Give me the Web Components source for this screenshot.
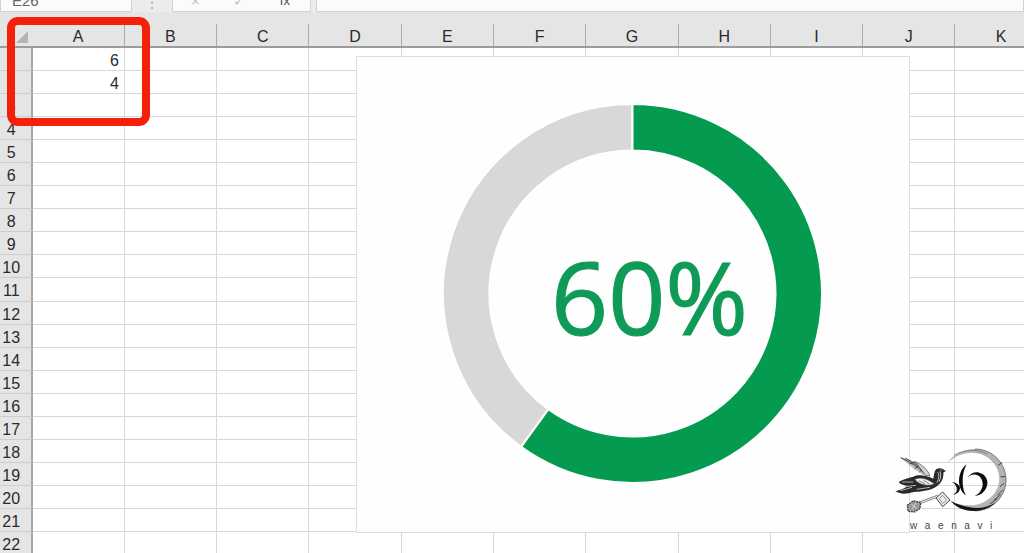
<!DOCTYPE html>
<html>
<head>
<meta charset="utf-8">
<title>Excel donut</title>
<style>
  html, body { margin: 0; height: 100%; overflow: hidden; background: #fff; }
  body { font-family: "Liberation Sans", Arial, sans-serif; }
</style>
</head>
<body>
<xl-app>
  <xl-formula-bar slot="top" name="E26"></xl-formula-bar>
  <xl-sheet></xl-sheet>
  <xl-callout></xl-callout>
  <xl-donut value="60"></xl-donut>
  <xl-logo></xl-logo>
</xl-app>
<script>
class XlApp extends HTMLElement {
    constructor() {
        super()
        this.attachShadow({ mode: 'open' }).innerHTML = `<style>
            :host { display: flex; flex-direction: column; position: relative; width: 1024px; height: 553px; overflow: hidden; }
        </style><slot name="top"></slot><slot></slot>`
    }
}

class XlFormulaBar extends HTMLElement {
    constructor() {
        super()
        this.attachShadow({ mode: 'open' })
    }
    connectedCallback() {
        const name = this.getAttribute('name') || ''
        this.shadowRoot.innerHTML = `<style>
            :host { display: flex; height: 12px; background: #ececec; flex: none; overflow: hidden; color: #666; font-size: 15px; }
            .box { background: #fbfbfb; border: 1px solid #d2d2d2; border-top: 0; box-sizing: border-box; height: 12px; }
            .name { width: 132px; line-height: 2px; padding-left: 11px; }
            .dots { width: 40px; text-align: center; color: #999; line-height: 6px; font-size: 12px; }
            .btns { width: 139px; display: flex; justify-content: space-between; padding: 0 20px 0 18px; color: #c4c4c4; line-height: 2px; }
            .btns .fx { color: #555; font-size: 13px; }
            .input { flex: 1; margin-left: 5px; }
        </style>
        <div class="box name">${name}</div>
        <div class="dots">⋮</div>
        <div class="box btns"><span>×</span><span>✓</span><span class="fx">fx</span></div>
        <div class="box input"></div>`
    }
}

class XlSheet extends HTMLElement {
    constructor() {
        super()
        this.attachShadow({ mode: 'open' })
    }
    connectedCallback() {
        const cols = 'ABCDEFGHIJK'.split('')
        const values = { 1: '6', 2: '4' }
        let cells = '<div class="corner"><svg width="32" height="35"><path d="M28 19V31H16Z" fill="#b4b4b4"/></svg></div>'
        cols.forEach(c => { cells += `<div class="col">${c}</div>` })
        for (let r = 1; r <= 22; r++) {
            cells += `<div class="row">${r}</div>`
            cols.forEach((c, i) => {
                cells += `<div class="cell">${i === 0 && values[r] ? values[r] : ''}</div>`
            })
        }
        this.shadowRoot.innerHTML = `<style>
            :host { display: grid; flex: 1; grid-template-columns: 32.5px repeat(11, 92.3px); grid-template-rows: 35.5px repeat(22, 23.1px); background: #fff; font-size: 16px; color: #2a2a2a; overflow: hidden; align-content: start; }
            .corner, .col { background: #e5e5e5; border-bottom: 2px solid #9c9c9c; box-sizing: border-box; }
            .corner svg { display: block; }
            .col { position: relative; text-align: center; padding: 16px 1px 0 0; line-height: 18px; }
            .col::after { content: ""; position: absolute; right: 0; top: 12px; bottom: 0; width: 1px; background: #aaa; }
            .row { background: #e5e5e5; border-right: 2px solid #a6a6a6; border-bottom: 1px solid #cdcdcd; box-sizing: border-box; text-align: center; padding: 2px 8px 0 0; line-height: 22px; }
            .cell { border-right: 1px solid #d8d8d8; border-bottom: 1px solid #d8d8d8; box-sizing: border-box; text-align: right; padding: 2px 5px 0 0; line-height: 22px; }
        </style>${cells}`
    }
}

class XlCallout extends HTMLElement {
    constructor() {
        super()
        this.attachShadow({ mode: 'open' }).innerHTML = `<style>
            :host { display: block; position: absolute; left: 7px; top: 17px; width: 143px; height: 109px; box-sizing: border-box; border: 8px solid #f5200c; border-radius: 11px; }
        </style>`
    }
}

class XlDonut extends HTMLElement {
    constructor() {
        super()
        this.attachShadow({ mode: 'open' })
    }
    connectedCallback() {
        const value = Number(this.getAttribute('value'))
        const cx = 276.5, cy = 237.5, ro = 189.5, ri = 143
        const end = value / 100 * Math.PI * 2
        const pt = (r, a) => `${(cx + r * Math.sin(a)).toFixed(2)} ${(cy - r * Math.cos(a)).toFixed(2)}`
        const seg = (a, b) => {
            const large = b - a > Math.PI ? 1 : 0
            return `M${pt(ro, a)}A${ro} ${ro} 0 ${large} 1 ${pt(ro, b)}L${pt(ri, b)}A${ri} ${ri} 0 ${large} 0 ${pt(ri, a)}Z`
        }
        this.shadowRoot.innerHTML = `<style>
            :host { display: block; position: absolute; left: 356px; top: 56px; width: 554px; height: 477px; box-sizing: border-box; background: #fefefe; outline: 1px solid #dedede; outline-offset: -1px; }
            svg { position: absolute; left: 0; top: 0; }
            .label { position: absolute; left: 195px; top: 175px; font: 400 100px/130px "Open Sans", Lato, sans-serif; font-stretch: 90%; letter-spacing: 0; -webkit-text-stroke: 1.2px #0f9b57; color: #0f9b57; white-space: nowrap; }
        </style>
        <svg width="554" height="477">
            <path d="${seg(end, Math.PI * 2)}" fill="#d8d8d8" stroke="#fff" stroke-width="2"/>
            <path d="${seg(0, end)}" fill="#049a50" stroke="#fff" stroke-width="2"/>
        </svg>
        <div class="label">${value}%</div>`
    }
}

class XlLogo extends HTMLElement {
    constructor() {
        super()
        this.attachShadow({ mode: 'open' }).innerHTML = `<style>
            :host { display: block; position: absolute; left: 880px; top: 430px; width: 144px; height: 123px; }
            svg { position: absolute; left: 0; top: 0; }
            .name { position: absolute; left: 30px; top: 89px; font: 10px/14px "Liberation Sans", sans-serif; letter-spacing: 7.6px; color: #444; white-space: nowrap; }
        </style>
        <svg width="144" height="123" viewBox="0 0 432 369">
            <!-- crescent -->
            <path d="M212 212C232 236 258 244 285 243C336 242 378 200 378 150C378 98 336 57 285 57C254 57 222 72 202 98C224 78 250 68 276 68C318 68 358 102 358 146C358 190 316 226 272 226C250 226 228 222 212 212Z" fill="#b4b4b4"/>
            <path d="M212 212C232 236 258 244 285 243C310 242 332 232 348 216C324 232 296 238 270 232C248 228 228 222 212 212Z" fill="#151515"/>
            <path d="M285 57C336 57 378 98 378 150C378 200 336 242 285 243" fill="none" stroke="#444" stroke-width="2"/>
            <path d="M352 196L368 180M342 210L362 194M330 222L352 206M360 170L372 160M362 140L376 140M354 106L366 98" stroke="#444" stroke-width="3" fill="none"/>
            <path d="M222 76C250 58 290 56 322 72" stroke="#666" stroke-width="2" fill="none"/>
            <!-- monogram -->
            <path d="M260 103C240 118 232 148 240 172C244 184 250 192 258 196C250 184 248 168 248 152C248 134 252 118 260 103Z" fill="#0c0c0c"/>
            <path d="M215 155C228 162 232 172 230 182C228 188 224 192 218 196C232 192 240 184 240 174C240 166 230 158 215 155Z" fill="#0c0c0c"/>
            <path d="M262 142C272 130 286 124 298 128C314 132 324 146 322 162C320 182 302 198 284 197C298 192 308 178 308 162C308 148 300 136 288 134C278 132 270 136 262 142Z" fill="#0c0c0c"/>
            <!-- bird: wings -->
            <path d="M60 82C92 88 126 104 146 128L132 136C110 124 84 104 60 82Z" fill="#bbb"/>
            <path d="M62 83C90 95 116 112 136 132M76 84C100 98 122 112 142 128M88 102L104 96M104 116L120 106M118 126L134 114" stroke="#333" stroke-width="2.5" fill="none"/>
            <path d="M104 94C122 102 144 118 150 138L136 136C126 120 114 106 104 94Z" fill="#d4d4d4" stroke="#444" stroke-width="2"/>
            <!-- bird: head and body -->
            <path d="M168 118C176 112 188 114 192 120L198 122L190 128C192 146 182 162 166 172C148 182 122 186 102 186C84 190 66 196 46 184C60 180 72 176 84 168C72 166 62 164 56 156C68 148 84 144 100 140C122 130 148 142 160 146C162 136 162 126 168 118Z" fill="#2a2a2a"/>
            <path d="M172 126C178 130 178 148 170 158M180 124C184 134 182 148 176 156" stroke="#ddd" stroke-width="2.5" fill="none"/>
            <path d="M104 148C124 138 146 148 164 162C144 170 118 166 104 148Z" fill="#eee" stroke="#333" stroke-width="2"/>
            <path d="M116 152L136 162M130 150L148 162" stroke="#555" stroke-width="2" fill="none"/>
            <path d="M66 156L100 156M62 182L96 172M74 170L108 166M110 178L150 172" stroke="#ccc" stroke-width="2.5" fill="none"/>
            <circle cx="183" cy="120" r="1.8" fill="#fff"/>
            <!-- key -->
            <path d="M116 220L174 198" stroke="#777" stroke-width="8" fill="none"/>
            <path d="M116 220L174 198" stroke="#fff" stroke-width="3" fill="none"/>
            <path d="M168 204L188 186L210 210L188 230Z" fill="#eee" stroke="#444" stroke-width="3"/>
            <path d="M178 206L188 196L200 210L188 220Z" fill="none" stroke="#666" stroke-width="2"/>
            <path d="M82 226L100 212L122 218L120 236L102 246L84 244Z" fill="#999" stroke="#333" stroke-width="4" stroke-dasharray="5 3"/>
            <path d="M94 222L110 236M108 220L96 238" stroke="#eee" stroke-width="2" fill="none"/>
        </svg>
        <div class="name">waenavi</div>`
    }
}

customElements.define('xl-app', XlApp)
customElements.define('xl-formula-bar', XlFormulaBar)
customElements.define('xl-sheet', XlSheet)
customElements.define('xl-callout', XlCallout)
customElements.define('xl-donut', XlDonut)
customElements.define('xl-logo', XlLogo)
</script>
</body>
</html>
